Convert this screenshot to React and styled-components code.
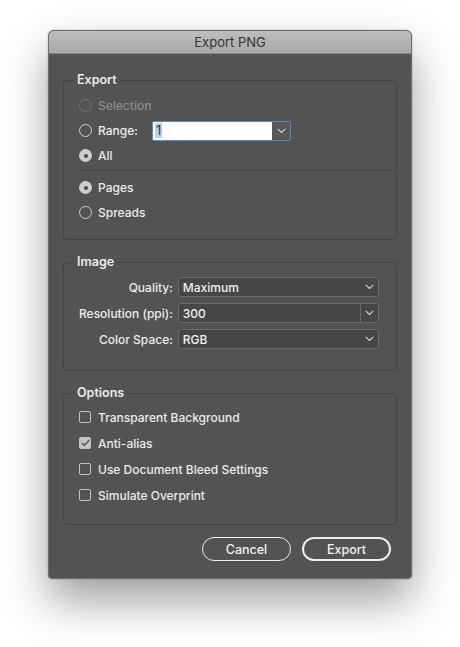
import React, { useState } from 'react';
import styled, { createGlobalStyle } from 'styled-components';

const GlobalStyle = createGlobalStyle`
    html, body {
        margin: 0;
        padding: 0;
        background: #ffffff;
    }
    body {
        font-family: Inter, "Noto Sans", "Liberation Sans", sans-serif;
        -webkit-font-smoothing: antialiased;
    }
`;

function Chevron() {
    return (
        <svg width="9" height="6" viewBox="0 0 9 6" fill="none">
            <path d="M1 1.2 L4.5 4.5 L8 1.2" stroke="#d0d0d0" strokeWidth="1.1" strokeLinecap="round" strokeLinejoin="round" />
        </svg>
    );
}

function Radio({ label, checked, disabled, onClick }) {
    return (
        <RadioRow $disabled={disabled} onClick={disabled ? undefined : onClick}>
            <RadioDot $checked={checked} $disabled={disabled} />
            <RowLabel $disabled={disabled}>{label}</RowLabel>
        </RadioRow>
    );
}

function Check({ label, checked, onClick }) {
    return (
        <CheckRow onClick={onClick}>
            <CheckBox $checked={checked}>
                {checked && (
                    <svg width="9" height="8" viewBox="0 0 9 8" fill="none">
                        <path d="M1.2 4.2 L3.4 6.4 L7.8 1.4" stroke="#5a5a5a" strokeWidth="1.5" strokeLinecap="round" strokeLinejoin="round" />
                    </svg>
                )}
            </CheckBox>
            <RowLabel>{label}</RowLabel>
        </CheckRow>
    );
}

function Select({ value, split }) {
    return (
        <SelectBox>
            <SelectValue>{value}</SelectValue>
            <SelectArrow $split={split}>
                <Chevron />
            </SelectArrow>
        </SelectBox>
    );
}

export default function App() {
    const [range, setRange] = useState('all');
    const [mode, setMode] = useState('pages');
    const [opts, setOpts] = useState({ transparent: false, antialias: true, bleed: false, overprint: false });

    const toggle = (k) => setOpts({ ...opts, [k]: !opts[k] });

    return (
        <Page>
            <GlobalStyle />
            <Dialog>
                <TitleBar>Export PNG</TitleBar>
                <Body>
                    <Group $top={5} $bottom={14}>
                        <Legend>Export</Legend>
                        <Radio label="Selection" disabled />
                        <RadioRow>
                            <RadioDot $checked={range === 'range'} onClick={() => setRange('range')} />
                            <RangeLabel onClick={() => setRange('range')}>Range:</RangeLabel>
                            <RangeField>
                                <RangeInput><Selected>1</Selected></RangeInput>
                                <RangeArrow><Chevron /></RangeArrow>
                            </RangeField>
                        </RadioRow>
                        <Radio label="All" checked={range === 'all'} onClick={() => setRange('all')} />
                        <Divider />
                        <Radio label="Pages" checked={mode === 'pages'} onClick={() => setMode('pages')} />
                        <Radio label="Spreads" checked={mode === 'spreads'} onClick={() => setMode('spreads')} />
                    </Group>

                    <Group $top={4} $bottom={21} $right={17}>
                        <Legend>Image</Legend>
                        <FieldGrid>
                            <FieldLabel>Quality:</FieldLabel>
                            <Select value="Maximum" />
                            <FieldLabel>Resolution (ppi):</FieldLabel>
                            <Select value="300" split />
                            <FieldLabel>Color Space:</FieldLabel>
                            <Select value="RGB" />
                        </FieldGrid>
                    </Group>

                    <Group $top={3} $bottom={16}>
                        <Legend>Options</Legend>
                        <Check label="Transparent Background" checked={opts.transparent} onClick={() => toggle('transparent')} />
                        <Check label="Anti-alias" checked={opts.antialias} onClick={() => toggle('antialias')} />
                        <Check label="Use Document Bleed Settings" checked={opts.bleed} onClick={() => toggle('bleed')} />
                        <Check label="Simulate Overprint" checked={opts.overprint} onClick={() => toggle('overprint')} />
                    </Group>

                    <Buttons>
                        <Button>Cancel</Button>
                        <Button $primary>Export</Button>
                    </Buttons>
                </Body>
            </Dialog>
        </Page>
    );
}

const Page = styled.div`
    width: 460px;
    height: 647px;
    padding: 30px 0 0 48px;
    box-sizing: border-box;
    background: #ffffff;
`;

const Dialog = styled.div`
    width: 364px;
    height: 549px;
    box-sizing: border-box;
    background: #535353;
    border: 1px solid #6e6e6e;
    border-radius: 6px 6px 4px 4px;
    box-shadow: 0 22px 45px rgba(0, 0, 0, 0.38), 0 0 2px rgba(0, 0, 0, 0.3);
    overflow: hidden;
    display: flex;
    flex-direction: column;
`;

const TitleBar = styled.div`
    height: 22px;
    flex-shrink: 0;
    background: linear-gradient(#bdbdbd, #a9a9a9);
    border-bottom: 1px solid #858585;
    color: #333333;
    font-size: 13px;
    line-height: 22px;
    text-align: center;
`;

const Body = styled.div`
    padding: 18px 14px 0 14px;
    display: flex;
    flex-direction: column;
    gap: 14px;
`;

const Group = styled.fieldset`
    margin: 0;
    padding: ${(p) => p.$top}px ${(p) => p.$right ?? 19}px ${(p) => p.$bottom}px 15px;
    border: 1px solid #444444;
    border-radius: 4px;
    min-width: 0;
`;

const Legend = styled.legend`
    margin-left: -5px;
    padding: 0 3px;
    color: #ececec;
    font-size: 12.5px;
    font-weight: 600;
    line-height: 16px;
`;

const RadioRow = styled.div`
    height: 25px;
    display: flex;
    align-items: center;
    cursor: ${(p) => (p.$disabled ? 'default' : 'pointer')};
    & + & {
        margin-top: 0;
    }
`;

const RadioDot = styled.span`
    width: 11px;
    height: 11px;
    border-radius: 50%;
    flex-shrink: 0;
    border: 1px solid ${(p) => (p.$disabled ? '#727272' : '#cfcfcf')};
    background: ${(p) => (p.$checked ? '#cdcdcd' : 'transparent')};
    position: relative;
    margin-right: 6px;
    &::after {
        content: '';
        display: ${(p) => (p.$checked ? 'block' : 'none')};
        position: absolute;
        left: 3.5px;
        top: 3.5px;
        width: 4px;
        height: 4px;
        border-radius: 50%;
        background: #4a4a4a;
    }
`;

const RowLabel = styled.span`
    color: ${(p) => (p.$disabled ? '#8b8b8b' : '#ececec')};
    font-size: 12px;
    font-weight: 500;
    white-space: nowrap;
`;

const RangeLabel = styled(RowLabel)`
    width: 54px;
`;

const RangeField = styled.div`
    width: 139px;
    height: 20px;
    box-sizing: border-box;
    border: 1.5px solid #4a8edb;
    border-radius: 2px;
    display: flex;
    overflow: hidden;
`;

const RangeInput = styled.div`
    flex: 1;
    background: #ffffff;
    display: flex;
    align-items: center;
    padding-left: 2px;
    font-size: 13px;
    color: #333;
`;

const Selected = styled.span`
    background: #b3d4fb;
    padding: 0 1px;
    line-height: 15px;
`;

const RangeArrow = styled.div`
    width: 18px;
    background: #585858;
    display: flex;
    align-items: center;
    justify-content: center;
`;

const Divider = styled.div`
    height: 1px;
    background: #484848;
    margin: 2px -19px 4px 0;
`;

const FieldGrid = styled.div`
    display: grid;
    grid-template-columns: max-content 1fr;
    column-gap: 5px;
    row-gap: 6px;
    align-items: center;
    padding-top: 3px;
`;

const FieldLabel = styled.span`
    color: #ececec;
    font-size: 12px;
    font-weight: 500;
    text-align: right;
    white-space: nowrap;
`;

const SelectBox = styled.div`
    height: 20px;
    box-sizing: border-box;
    background: #464646;
    border: 1px solid #6a6a6a;
    border-radius: 3px;
    display: flex;
    align-items: center;
`;

const SelectValue = styled.span`
    flex: 1;
    padding-left: 4px;
    color: #f0f0f0;
    font-size: 12px;
    font-weight: 500;
`;

const SelectArrow = styled.span`
    width: 17px;
    height: 100%;
    display: flex;
    align-items: center;
    justify-content: center;
    border-left: 1px solid ${(p) => (p.$split ? '#6a6a6a' : 'transparent')};
`;

const CheckRow = styled.div`
    height: 26px;
    display: flex;
    align-items: center;
    cursor: pointer;
`;

const CheckBox = styled.span`
    width: 10px;
    height: 10px;
    flex-shrink: 0;
    border: 1px solid #c4c4c4;
    border-radius: 2px;
    margin-right: 7px;
    background: ${(p) => (p.$checked ? '#c4c4c4' : 'transparent')};
    display: flex;
    align-items: center;
    justify-content: center;
`;

const Buttons = styled.div`
    display: flex;
    justify-content: flex-end;
    gap: 11px;
    padding-right: 6px;
    margin-top: -2px;
`;

const Button = styled.button`
    width: 89px;
    height: 24px;
    box-sizing: border-box;
    background: transparent;
    border: ${(p) => (p.$primary ? '2px' : '1.3px')} solid #eeeeee;
    border-radius: 12px;
    color: #f2f2f2;
    font-family: Inter, "Noto Sans", "Liberation Sans", sans-serif;
    font-size: 12.5px;
    font-weight: 500;
    cursor: pointer;
`;
